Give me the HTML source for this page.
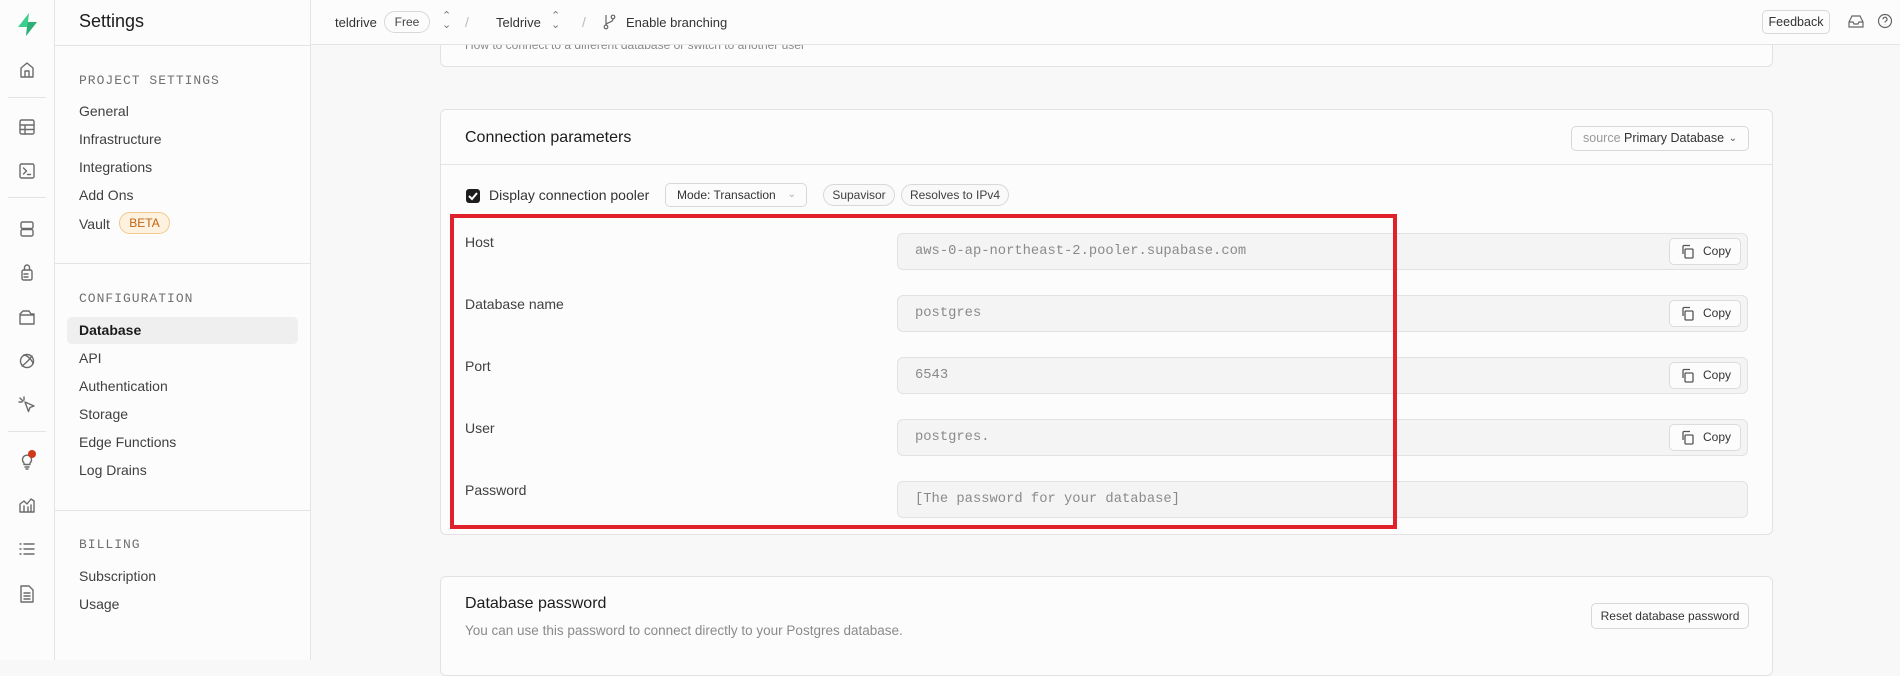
<!DOCTYPE html>
<html><head><meta charset="utf-8"><style>
*{box-sizing:border-box;margin:0;padding:0}
body{width:1900px;height:660px;overflow:hidden;background:#f8f8f8;font-family:"Liberation Sans",sans-serif;font-size:14px;color:#1c1c1c;position:relative}
.a{position:absolute}
#bar{left:0;top:0;width:55px;height:660px;background:#fcfcfc;border-right:1px solid #e4e4e4;z-index:10}
#side{left:55px;top:0;width:256px;height:660px;background:#fcfcfc;border-right:1px solid #e4e4e4;z-index:10}
#top{left:311px;top:0;width:1589px;height:45px;background:#fcfcfc;border-bottom:1px solid #e4e4e4;z-index:10}
.ic{position:absolute;left:17px;width:20px;height:20px}
.ic svg{width:20px;height:20px;fill:none;stroke:#6b6b6b;stroke-width:1.4;stroke-linecap:round;stroke-linejoin:round}
.hr{position:absolute;left:8px;width:38px;height:1px;background:#e4e4e4}
.sh{position:absolute;left:24px;font-family:"Liberation Mono",monospace;font-size:13px;color:#707070;letter-spacing:1px}
.si{position:absolute;left:24px;color:#404040;font-size:14px}
.card{position:absolute;left:440px;width:1333px;background:#fcfcfc;border:1px solid #e2e2e2;border-radius:6px}
.lbl{position:absolute;left:465px;color:#404040;font-size:14px}
.inp{position:absolute;left:897px;width:851px;height:37px;background:#f4f4f4;border:1px solid #e2e2e2;border-radius:6px;font-family:"Liberation Mono",monospace;font-size:13.8px;color:#8a8a8a;padding:0 0 0 17px;line-height:35px}
.cp{position:absolute;right:6px;top:4px;width:72px;height:27px;background:#fcfcfc;border:1px solid #dcdcdc;border-radius:5px;font-family:"Liberation Sans",sans-serif;font-size:12px;color:#333;line-height:25px;padding-left:33px}
.cp svg{position:absolute;left:11px;top:5px;width:14px;height:15px;fill:none;stroke:#555;stroke-width:1.3}
.pill{position:absolute;height:22px;border:1px solid #d8d8d8;border-radius:11px;font-size:12px;color:#404040;line-height:20px;text-align:center;background:#f9f9f9}
</style></head><body>
<div id="bar" class="a">
 <svg class="a" style="left:15px;top:12px" width="25" height="25" viewBox="0 0 25 25"><path d="M14 1 L3 15 H12 L11 24 L22 10 H13 Z" fill="#3ecf8e"/><path d="M12 15 L11 24 L22 10 H13 Z" fill="#249a66" opacity=".6"/></svg>
 <div class="ic" style="top:60px"><svg viewBox="0 0 20 20"><path d="M4 17V8l6-5 6 5v9zM8 17v-6h4v6"/></svg></div>
 <div class="hr" style="top:97px"></div>
 <div class="ic" style="top:117px"><svg viewBox="0 0 20 20"><rect x="3" y="3" width="14" height="14" rx="1.5"/><path d="M3 8h14M3 12.5h14M8 8v9"/></svg></div>
 <div class="ic" style="top:161px"><svg viewBox="0 0 20 20"><rect x="3" y="3" width="14" height="14" rx="1.5"/><path d="M6.5 7l3 3-3 3M10.5 13.5h3"/></svg></div>
 <div class="hr" style="top:197px"></div>
 <div class="ic" style="top:219px"><svg viewBox="0 0 20 20"><rect x="4" y="3" width="12" height="6.5" rx="1.5"/><rect x="4" y="10.5" width="12" height="6.5" rx="1.5"/></svg></div>
 <div class="ic" style="top:262px"><svg viewBox="0 0 20 20"><path d="M7.5 8V5.5a2.5 2.5 0 015 0V8"/><rect x="5" y="8" width="10" height="10" rx="1.5"/><path d="M7 12h4M7 15h4"/></svg></div>
 <div class="ic" style="top:307px"><svg viewBox="0 0 20 20"><path d="M3 7l3-3h6l2 3h3v10H3z M3 8h14"/></svg></div>
 <div class="ic" style="top:351px"><svg viewBox="0 0 20 20"><circle cx="10" cy="10" r="6.5"/><path d="M5 15C8 13 13 8 15 5M7 4c3 0 9 6 9 9"/></svg></div>
 <div class="ic" style="top:395px"><svg viewBox="0 0 20 20"><path d="M8 7l9 4-4 1.5-1.5 4zM3 3l3 3M7 2v3M2 7h3"/></svg></div>
 <div class="hr" style="top:431px"></div>
 <div class="ic" style="top:451px"><svg viewBox="0 0 20 20"><path d="M7 12a4.5 4.5 0 116 0v1.5H7zM8 16h4M9 18h2"/></svg><span class="a" style="left:11px;top:-1px;width:8px;height:8px;border-radius:50%;background:#d03a1b"></span></div>
 <div class="ic" style="top:495px"><svg viewBox="0 0 20 20"><path d="M3 17V9l4-3 3 3 4-5 3 2v11zM7 17v-6M11 17v-5M14 17v-7"/></svg></div>
 <div class="ic" style="top:539px"><svg viewBox="0 0 20 20"><path d="M7 5h10M7 10h10M7 15h10M3 5h1M3 10h1M3 15h1"/></svg></div>
 <div class="ic" style="top:584px"><svg viewBox="0 0 20 20"><path d="M4 2h8l4 4v12H4zM7 9h6M7 12h6M7 15h6"/></svg></div>
</div>
<div id="side" class="a">
 <div class="a" style="left:24px;top:11px;font-size:18px;color:#1c1c1c">Settings</div>
 <div class="a" style="left:0;top:45px;width:256px;height:1px;background:#e4e4e4"></div>
 <div class="sh" style="top:73px">PROJECT SETTINGS</div>
 <div class="si" style="top:103px">General</div>
 <div class="si" style="top:131px">Infrastructure</div>
 <div class="si" style="top:159px">Integrations</div>
 <div class="si" style="top:187px">Add Ons</div>
 <div class="si" style="top:216px">Vault</div>
 <div class="a" style="left:64px;top:212px;width:51px;height:22px;border:1px solid #f1c98d;border-radius:11px;background:#fdf2e0;color:#c3640f;font-size:12px;text-align:center;line-height:20px">BETA</div>
 <div class="a" style="left:0;top:263px;width:256px;height:1px;background:#e4e4e4"></div>
 <div class="sh" style="top:291px">CONFIGURATION</div>
 <div class="a" style="left:12px;top:317px;width:231px;height:27px;background:#efefef;border-radius:5px"></div>
 <div class="si" style="top:322px;color:#1c1c1c;font-weight:bold">Database</div>
 <div class="si" style="top:350px">API</div>
 <div class="si" style="top:378px">Authentication</div>
 <div class="si" style="top:406px">Storage</div>
 <div class="si" style="top:434px">Edge Functions</div>
 <div class="si" style="top:462px">Log Drains</div>
 <div class="a" style="left:0;top:510px;width:256px;height:1px;background:#e4e4e4"></div>
 <div class="sh" style="top:537px">BILLING</div>
 <div class="si" style="top:568px">Subscription</div>
 <div class="si" style="top:596px">Usage</div>
</div>
<div id="top" class="a">
 <div class="a" style="left:24px;top:15px;font-size:13px;color:#333">teldrive</div>
 <div class="a" style="left:73px;top:11px;width:46px;height:22px;border:1px solid #d8d8d8;border-radius:11px;font-size:12px;color:#444;text-align:center;line-height:20px">Free</div>
 <div class="a" style="left:131px;top:12px;font-size:11px;color:#777;line-height:9px">⌃<br>⌄</div>
 <div class="a" style="left:154px;top:14px;color:#bbb">/</div>
 <div class="a" style="left:185px;top:15px;font-size:13px;color:#333">Teldrive</div>
 <div class="a" style="left:240px;top:12px;font-size:11px;color:#777;line-height:9px">⌃<br>⌄</div>
 <div class="a" style="left:271px;top:14px;color:#bbb">/</div>
 <svg class="a" style="left:292px;top:14px" width="14" height="16" viewBox="0 0 14 16" fill="none" stroke="#666" stroke-width="1.2"><circle cx="3" cy="13" r="1.8"/><circle cx="10" cy="3" r="1.8"/><path d="M3 1v10M10 5c0 4-7 3-7 6"/></svg>
 <div class="a" style="left:315px;top:15px;font-size:13px;color:#333">Enable branching</div>
 <div class="a" style="left:1451px;top:10px;width:68px;height:24px;border:1px solid #d8d8d8;border-radius:5px;font-size:12.5px;color:#333;text-align:center;line-height:22px;background:#fcfcfc">Feedback</div>
 <svg class="a" style="left:1537px;top:14px" width="16" height="15" viewBox="0 0 16 15" fill="none" stroke="#666" stroke-width="1.2"><path d="M1 8l3-6h8l3 6v5H1zM1 8h4l1 2h4l1-2h4"/></svg>
 <svg class="a" style="left:1566px;top:13px" width="16" height="16" viewBox="0 0 16 16" fill="none" stroke="#666" stroke-width="1.2"><circle cx="8" cy="8" r="6.5"/><path d="M6 6.3a2 2 0 113 1.7c-.8.4-1 .8-1 1.6M8 11.5v.3"/></svg>
</div>
<div class="card" style="top:-10px;height:77px">
 <div class="a" style="left:24px;top:47px;font-size:12px;color:#888">How to connect to a different database or switch to another user</div>
</div>
<div class="card" style="top:109px;height:426px">
 <div class="a" style="left:24px;top:19px;font-size:16px;color:#1c1c1c">Connection parameters</div>
 <div class="a" style="left:1130px;top:16px;width:178px;height:25px;border:1px solid #d8d8d8;border-radius:5px;font-size:12.5px;line-height:23px;padding-left:11px;color:#333;background:#fcfcfc"><span style="color:#999">source</span> Primary Database <span style="position:absolute;right:11px;top:0;font-size:10px;color:#555">&#8964;</span></div>
 <div class="a" style="left:0;top:54px;width:1331px;height:1px;background:#e4e4e4"></div>
 <div class="a" style="left:25px;top:79px;width:14px;height:14px;background:#1c1c1c;border-radius:3px"><svg width="14" height="14" viewBox="0 0 14 14" fill="none" stroke="#fff" stroke-width="2"><path d="M3 7l3 3 5-6"/></svg></div>
 <div class="a" style="left:48px;top:77px;font-size:14px;color:#333">Display connection pooler</div>
 <div class="a" style="left:224px;top:73px;width:142px;height:24px;border:1px solid #d8d8d8;border-radius:5px;font-size:12px;color:#333;line-height:22px;padding-left:11px;background:#fcfcfc">Mode: Transaction <span style="position:absolute;right:10px;color:#aaa;font-size:10px">&#8964;</span></div>
</div>
<div class="pill" style="left:823px;top:184px;width:72px">Supavisor</div>
<div class="pill" style="left:901px;top:184px;width:108px">Resolves to IPv4</div>
<div class="lbl" style="top:234px">Host</div>
<div class="lbl" style="top:296px">Database name</div>
<div class="lbl" style="top:358px">Port</div>
<div class="lbl" style="top:420px">User</div>
<div class="lbl" style="top:482px">Password</div>
<div class="inp" style="top:233px">aws-0-ap-northeast-2.pooler.supabase.com<div class="cp"><svg viewBox="0 0 14 15"><rect x="4" y="5" width="8" height="9" rx="1"/><path d="M2 10V2.5a1 1 0 011-1h6"/></svg>Copy</div></div>
<div class="inp" style="top:295px">postgres<div class="cp"><svg viewBox="0 0 14 15"><rect x="4" y="5" width="8" height="9" rx="1"/><path d="M2 10V2.5a1 1 0 011-1h6"/></svg>Copy</div></div>
<div class="inp" style="top:357px">6543<div class="cp"><svg viewBox="0 0 14 15"><rect x="4" y="5" width="8" height="9" rx="1"/><path d="M2 10V2.5a1 1 0 011-1h6"/></svg>Copy</div></div>
<div class="inp" style="top:419px">postgres.<div class="cp"><svg viewBox="0 0 14 15"><rect x="4" y="5" width="8" height="9" rx="1"/><path d="M2 10V2.5a1 1 0 011-1h6"/></svg>Copy</div></div>
<div class="inp" style="top:481px">[The password for your database]</div>
<div class="a" style="left:450px;top:214px;width:947px;height:315px;border:4px solid #e0202b"></div>
<div class="card" style="top:576px;height:100px">
 <div class="a" style="left:24px;top:18px;font-size:16px;color:#1c1c1c">Database password</div>
 <div class="a" style="left:24px;top:46px;font-size:13.5px;color:#8a8a8a">You can use this password to connect directly to your Postgres database.</div>
 <div class="a" style="left:1150px;top:26px;width:158px;height:26px;border:1px solid #d8d8d8;border-radius:5px;font-size:12px;color:#333;text-align:center;line-height:24px;background:#fcfcfc">Reset database password</div>
</div>
</body></html>
